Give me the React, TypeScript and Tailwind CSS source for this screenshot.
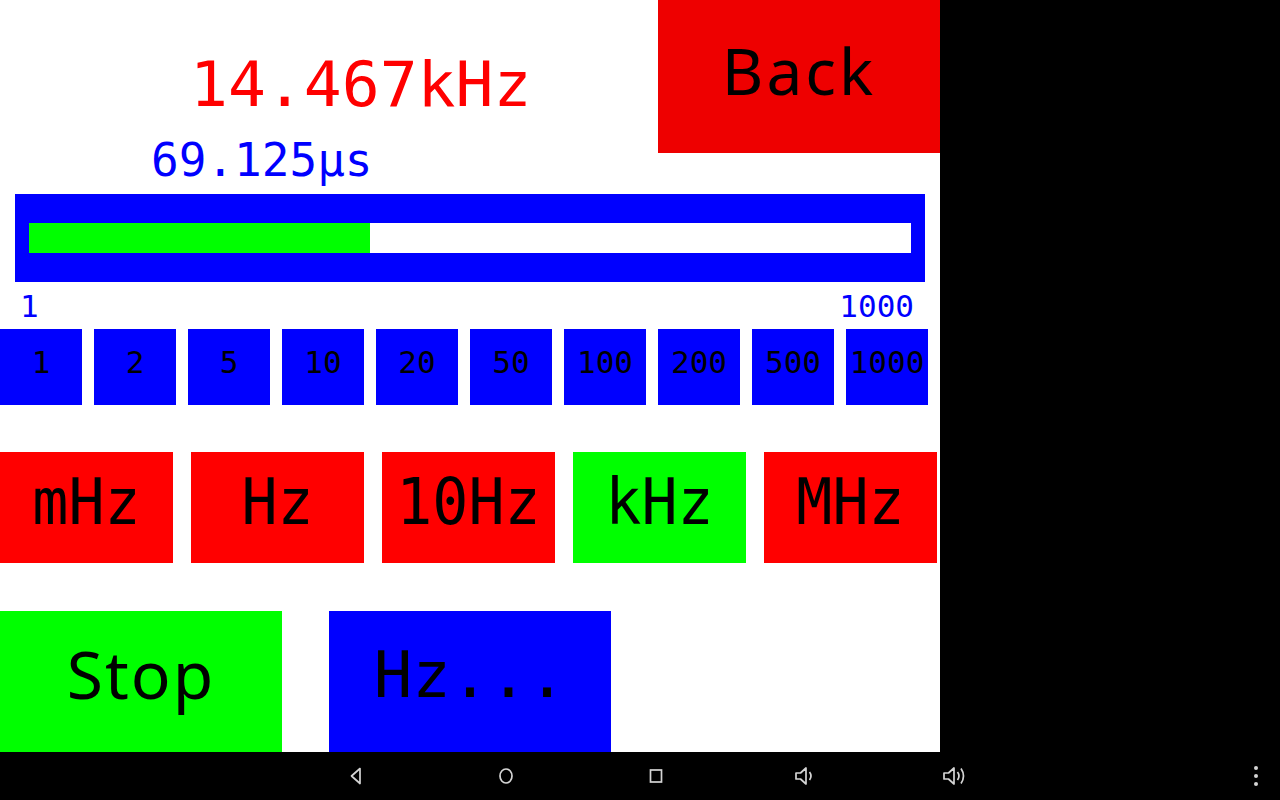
import React from 'react';

const MONO = { fontFamily: '"DejaVu Sans Mono", "Liberation Mono", monospace' };
const SANS = { fontFamily: '"Noto Sans", "Open Sans", sans-serif' };

const steps = ['1', '2', '5', '10', '20', '50', '100', '200', '500', '1000'];
const units = [
  { label: 'mHz', active: false },
  { label: 'Hz', active: false },
  { label: '10Hz', active: false },
  { label: 'kHz', active: true },
  { label: 'MHz', active: false },
];

// position of the slider, 0..1
const level = 341 / 882;

const NavBar: React.FC = () => (
  <div className="h-[48px] bg-black flex items-center pl-[281px] pr-[22px] text-[#d4d4d4]">
    <div className="w-[150px] flex justify-center">
      <svg width="16" height="20" viewBox="0 0 16 20" fill="none" stroke="currentColor" strokeWidth="1.7">
        <path d="M12 2.5 L3.5 10 L12 17.5 Z" strokeLinejoin="round" />
      </svg>
    </div>
    <div className="w-[150px] flex justify-center">
      <svg width="18" height="20" viewBox="0 0 18 20" fill="none" stroke="currentColor" strokeWidth="1.7">
        <ellipse cx="9" cy="10" rx="6" ry="7" />
      </svg>
    </div>
    <div className="w-[150px] flex justify-center">
      <svg width="16" height="20" viewBox="0 0 16 20" fill="none" stroke="currentColor" strokeWidth="1.7">
        <rect x="2.5" y="4" width="11" height="12" />
      </svg>
    </div>
    <div className="w-[150px] flex justify-center">
      <svg width="24" height="22" viewBox="0 0 24 22" fill="none" stroke="currentColor" strokeWidth="1.7">
        <path d="M2 8 H6.5 L12 3 V19 L6.5 14 H2 Z" strokeLinejoin="round" />
        <path d="M15.5 7 Q18.5 11 15.5 15" />
      </svg>
    </div>
    <div className="w-[150px] flex justify-center">
      <svg width="28" height="24" viewBox="0 0 28 24" fill="none" stroke="currentColor" strokeWidth="1.7">
        <path d="M2 9 H6.5 L12 4 V20 L6.5 15 H2 Z" strokeLinejoin="round" />
        <path d="M15.5 8 Q18.5 12 15.5 16" />
        <path d="M19 4.5 Q24 12 19 19.5" />
      </svg>
    </div>
    <div className="ml-auto flex flex-col gap-[4px] items-center">
      <span className="w-[4px] h-[4px] rounded-full bg-[#d4d4d4]" />
      <span className="w-[4px] h-[4px] rounded-full bg-[#d4d4d4]" />
      <span className="w-[4px] h-[4px] rounded-full bg-[#d4d4d4]" />
    </div>
  </div>
);

export default function App() {
  return (
    <div className="w-[1280px] h-[800px] bg-black flex flex-col overflow-hidden">
      <div className="flex">
        <div className="w-[940px] h-[752px] bg-white flex flex-col">
          {/* readout + back */}
          <div className="flex h-[194px]">
            <div className="flex-1 flex flex-col">
              <div className="pt-[53px] pl-[190px] text-[63px] leading-none text-[#ff0000] whitespace-nowrap" style={MONO}>
                14.467kHz
              </div>
              <div className="mt-[21px] pl-[151px] text-[46px] leading-none text-[#0000ff] whitespace-nowrap" style={MONO}>
                69.125µs
              </div>
            </div>
            <button className="w-[282px] h-[153px] bg-[#ee0000] text-black text-[64px] leading-none tracking-[3px] flex items-center justify-center pb-[12px]" style={SANS}>
              Back
            </button>
          </div>

          {/* slider */}
          <div className="mx-[15px] h-[88px] bg-[#0000ff] px-[14px] py-[29px]">
            <div className="h-[30px] bg-white flex">
              <div className="h-full bg-[#00ff00]" style={{ width: `${level * 100}%` }} />
            </div>
          </div>

          <div className="h-[47px] pt-[9px] pl-[20px] pr-[26px] flex justify-between text-[31px] leading-none text-[#0000ff]" style={MONO}>
            <span>1</span>
            <span>1000</span>
          </div>

          {/* step buttons */}
          <div className="flex gap-[12px]">
            {steps.map((s) => (
              <button key={s} className="w-[82px] h-[76px] bg-[#0000ff] text-black text-[31px] leading-none flex items-center justify-center pb-[10px]" style={MONO}>
                {s}
              </button>
            ))}
          </div>

          {/* unit buttons */}
          <div className="flex gap-[18px] mt-[47px]">
            {units.map((u) => (
              <button
                key={u.label}
                className={`w-[173px] h-[111px] text-black flex items-center justify-center pb-[14px] ${u.active ? 'bg-[#00ff00]' : 'bg-[#ff0000]'}`}
              >
                <span className="inline-block text-[60px] leading-none scale-y-[1.075]" style={MONO}>
                  {u.label}
                </span>
              </button>
            ))}
          </div>

          {/* bottom buttons */}
          <div className="flex gap-[47px] mt-[48px]">
            <button className="w-[282px] h-[141px] bg-[#00ff00] text-black text-[66px] leading-none tracking-[2px] flex items-center justify-center pb-[18px]" style={SANS}>
              Stop
            </button>
            <button className="w-[282px] h-[141px] bg-[#0000ff] text-black text-[64px] leading-none flex items-center justify-center pb-[13px]" style={MONO}>
              Hz...
            </button>
          </div>
        </div>
        <div className="flex-1 bg-black" />
      </div>
      <NavBar />
    </div>
  );
}
